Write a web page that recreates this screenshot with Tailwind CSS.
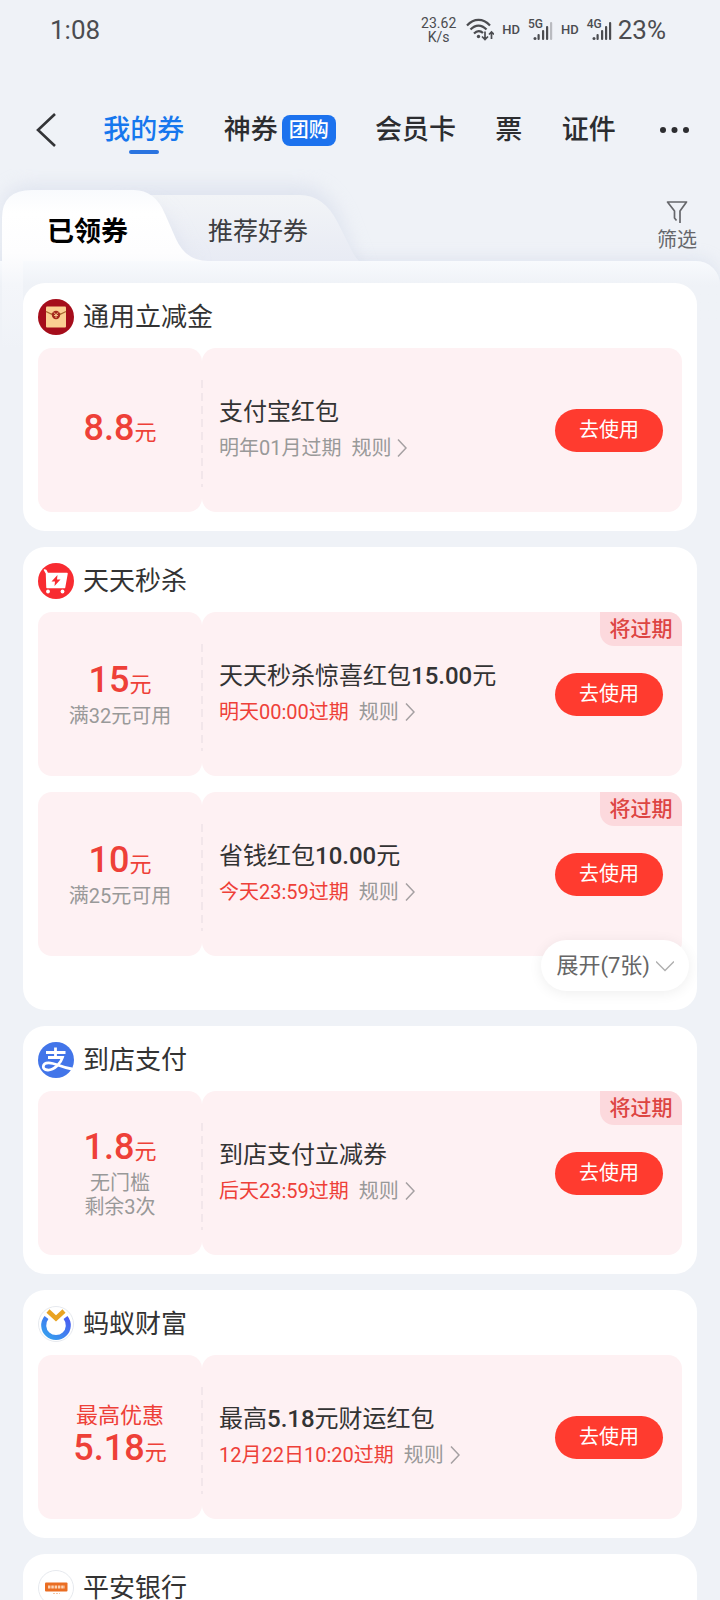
<!DOCTYPE html>
<html lang="zh-CN">
<head>
<meta charset="utf-8">
<meta name="viewport" content="width=device-width, initial-scale=1">
<title>我的券</title>
<script src="https://cdn.jsdelivr.net/npm/@tailwindcss/browser@4"></script>
</head>
<body class="h-screen overflow-hidden bg-[#eff2f7] font-['Roboto','Noto_Sans_CJK_SC',sans-serif] text-[#333]">

<!-- Shared symbols -->
<svg class="hidden" aria-hidden="true">
  <symbol id="chev" viewBox="0 0 10 20"><path d="M1 1.500 9 10 1 18.500" fill="none" stroke="#a5a0a2" stroke-width="1.500"/></symbol>
</svg>

<!-- Status bar -->
<div class="flex h-[60px] items-center justify-between pr-[54px] pl-[50px] text-[26px] text-[#4b4c50]">
  <span>1:08</span>
  <div class="flex items-center">
    <div class="text-center text-sm leading-[14px]"><p>23.62</p><p>K/s</p></div>
    <svg class="ml-2.5 h-6 w-7" viewBox="0 0 28 24" fill="none" stroke="#4b4c50" stroke-width="2.200">
      <path d="M1 7.500C8 0 17 0 24 7.500"/><path d="M4.500 11.500C9.500 6.200 15.500 6.200 20.500 11.500"/><path d="M8 15.500C11 12.500 14.500 12.500 17 15"/>
      <circle cx="12.500" cy="18.500" r="1.700" fill="#4b4c50" stroke="none"/>
      <path d="M19 13.500v8M16 18.500l3 3 3-3M25.500 21v-7M23 16.500l2.500-2.500 2.500 2.500" stroke-width="1.700"/>
    </svg>
    <span class="ml-2 text-[13px] font-medium">HD</span>
    <div class="ml-2 flex">
      <span class="text-xs leading-[10px] font-medium">5G</span>
      <svg class="-ml-2.5 h-[22px] w-5" viewBox="0 0 20 22"><g fill="#4b4c50"><circle cx="2" cy="19.500" r="1.500"/><rect x="4.500" y="15" width="2.200" height="6" rx="1"/><rect x="9" y="11" width="2.200" height="10" rx="1"/><rect x="13" y="7" width="2.200" height="14" rx="1"/></g><rect x="17" y="3" width="2.200" height="18" rx="1" fill="#b9bbc0"/></svg>
    </div>
    <span class="ml-2 text-[13px] font-medium">HD</span>
    <div class="ml-2 flex">
      <span class="text-xs leading-[10px] font-medium">4G</span>
      <svg class="-ml-2.5 h-[22px] w-5" viewBox="0 0 20 22"><g fill="#4b4c50"><circle cx="2" cy="19.500" r="1.500"/><rect x="4.500" y="15" width="2.200" height="6" rx="1"/><rect x="9" y="11" width="2.200" height="10" rx="1"/><rect x="13" y="7" width="2.200" height="14" rx="1"/><rect x="17" y="3" width="2.200" height="18" rx="1"/></g></svg>
    </div>
    <span class="ml-1.5">23%</span>
  </div>
</div>

<!-- Navigation -->
<nav class="flex h-[109px] items-center justify-between pt-[31px] pr-[30px] pl-9 text-[27px] leading-10 font-medium text-[#2c2d30]">
  <button class="mr-2" aria-label="返回"><svg class="h-[34px] w-5" viewBox="0 0 20 34" fill="none" stroke="#333437" stroke-width="2.600"><path d="M19 1 2 17l17 16"/></svg></button>
  <a href="#" class="relative text-[#1677ee]">我的券<span class="absolute -bottom-1 left-1/2 h-1 w-[30px] -translate-x-1/2 rounded-full bg-[#2a74e0]"></span></a>
  <a href="#" class="flex items-center gap-1">神券<span class="flex h-[31px] w-[54px] items-center justify-center rounded-lg bg-[#1c72ee] text-[20px] text-white">团购</span></a>
  <a href="#">会员卡</a>
  <a href="#">票</a>
  <a href="#">证件</a>
  <button class="ml-1" aria-label="更多"><svg class="h-2 w-[31px]" viewBox="0 0 31 8" fill="#2c2d30"><circle cx="4" cy="4" r="3"/><circle cx="15.500" cy="4" r="3"/><circle cx="27" cy="4" r="3"/></svg></button>
</nav>

<!-- Folder tabs -->
<div class="relative">
  <div class="absolute inset-x-0 top-[92px] h-[60px] rounded-tr-[24px] bg-linear-to-b from-[#f8fafd] to-[#eff2f7] to-[24px] shadow-[0_-4px_14px_rgba(200,208,228,0.35)] [clip-path:inset(-30px_0_0_0)]"></div>
  <svg class="absolute top-0 left-0 h-[272px] w-[420px]" viewBox="0 0 420 272" aria-hidden="true">
    <defs>
      <linearGradient id="g1" gradientUnits="userSpaceOnUse" x1="0" y1="20" x2="0" y2="180"><stop offset="0" stop-color="#f8fafd"/><stop offset=".15" stop-color="#fff"/><stop offset=".4" stop-color="#fdfdfe"/><stop offset=".6" stop-color="#f4f6fa"/><stop offset="1" stop-color="#eff2f7"/></linearGradient>
      <linearGradient id="g2" x1="0" y1="0" x2="0" y2="1"><stop offset="0" stop-color="#f2f4f7"/><stop offset="1" stop-color="#e8ebf4"/></linearGradient>
      <filter id="sh" x="-20%" y="-30%" width="140%" height="160%"><feGaussianBlur stdDeviation="9"/></filter>
      <clipPath id="above"><path d="M0 0h420v92H0z"/></clipPath>
    </defs>
    <g clip-path="url(#above)">
      <path d="M2 110V45Q2 16 32 16H300Q330 16 345 60L364 110z" fill="#d5dbea" opacity=".6" filter="url(#sh)"/>
      <path d="M140 26H300Q324 26 338 54L352 82Q355 88 359 92H140z" fill="url(#g2)"/>
      <path d="M120 34H140Q160 34 172 58L186 86 200 92H120z" fill="#d5dbea" opacity=".5" filter="url(#sh)"/>
    </g>
    <path d="M2 272V49Q2 21 32 21H134Q155 21 165 45L176 70Q186 92 208 92H23V272z" fill="url(#g1)"/>
  </svg>
  <div class="relative flex h-[92px] items-center pt-[34px] pr-[23px] pl-[47px]">
    <button class="text-[27px] font-bold text-black">已领券</button>
    <button class="ml-20 text-[25px] text-[#3c3d40]">推荐好券</button>
    <button class="ml-auto flex flex-col items-center text-[20px] leading-6 text-[#66676b]">
      <svg class="mb-1 -mt-3 h-6 w-[22px]" viewBox="0 0 22 24" fill="none" stroke="#66676b" stroke-width="1.700" stroke-linejoin="round"><path d="M14 23V11L20.500 2h-19L8.500 11v7l2 2.500"/></svg>筛选
    </button>
  </div>
</div>

<!-- Coupon groups -->
<main class="relative flex flex-col gap-4 px-[23px] pt-[22px]">

  <section class="rounded-[22px] bg-white px-[15px] pt-4 pb-[19px]">
    <h2 class="mb-[13px] flex h-9 items-center gap-[9px] text-[26px]">
      <svg class="size-9" viewBox="0 0 36 36"><circle cx="18" cy="18" r="18" fill="#a50d1b"/><rect x="8" y="7.500" width="20" height="21" rx="1" fill="#fbcf92"/><path d="M8 12.500Q18 19 28 12.500" fill="none" stroke="#a8672e" stroke-width="1.200"/><circle cx="18" cy="16" r="4.200" fill="#a52a1e"/><path d="m16 13.500 2 2.500 2-2.500M18 16v3M16 16.500h4" stroke="#fbcf92" fill="none" stroke-width=".9"/></svg>
      通用立减金
    </h2>
    <article class="relative flex h-[164px]">
      <div class="flex w-[164px] flex-col items-center justify-center rounded-[14px] bg-[#fef1f3] text-[20px] leading-6 text-[#999]">
        <p class="text-[22px] leading-[38px] text-[#ee4038]"><span class="text-[36px] font-medium">8.8</span>元</p>
      </div>
      <div class="flex flex-1 items-center justify-between rounded-[14px] bg-[#fef1f3] pr-[19px] pl-[17px]">
        <div>
          <h3 class="text-[24px] leading-9">支付宝红包</h3>
          <p class="flex items-center text-[20px] leading-9 text-[#999]">明年01月过期<a href="#" class="ml-2.5 flex items-center gap-1.5 text-[#999]">规则<svg class="h-5 w-2.5"><use href="#chev"/></svg></a></p>
        </div>
        <button class="h-[43px] w-[108px] rounded-full bg-[#ff3b2f] text-[20px] text-white">去使用</button>
      </div>
      <span class="absolute top-8 left-[163px] h-[107px] w-0.5 bg-[repeating-linear-gradient(#f2e6ea_0_8px,transparent_8px_13px)]"></span>
    </article>
  </section>

  <section class="relative rounded-[22px] bg-white px-[15px] pt-4 pb-[54px]">
    <h2 class="mb-[13px] flex h-9 items-center gap-[9px] text-[26px]">
      <svg class="size-9" viewBox="0 0 36 36"><circle cx="18" cy="18" r="18" fill="#f82b31"/><path d="M6.500 7 8 7.500 9.500 10.500H29L26.500 24.500H9L8.500 10.500z" fill="#fff" stroke="#fff" stroke-width="1.500" stroke-linejoin="round"/><circle cx="10" cy="28.500" r="1.900" fill="#fff"/><circle cx="24.500" cy="28.500" r="1.900" fill="#fff"/><path d="m19.500 12-6 6.500H17L16.500 23l6-6.500H19z" fill="#f82b31"/></svg>
      天天秒杀
    </h2>
    <div class="flex flex-col gap-4">
      <article class="relative flex h-[164px]">
        <div class="flex w-[164px] flex-col items-center justify-center rounded-[14px] bg-[#fef1f3] text-[20px] leading-6 text-[#999]">
          <p class="text-[22px] leading-[38px] text-[#ee4038]"><span class="text-[36px] font-medium">15</span>元</p>
          <p>满32元可用</p>
        </div>
        <div class="flex flex-1 items-center justify-between rounded-[14px] bg-[#fef1f3] pr-[19px] pl-[17px]">
          <div>
            <h3 class="text-[24px] leading-9">天天秒杀惊喜红包<span class="font-medium">15.00</span>元</h3>
            <p class="flex items-center text-[20px] leading-9 text-[#ee4038]">明天00:00过期<a href="#" class="ml-2.5 flex items-center gap-1.5 text-[#999]">规则<svg class="h-5 w-2.5"><use href="#chev"/></svg></a></p>
          </div>
          <button class="h-[43px] w-[108px] rounded-full bg-[#ff3b2f] text-[20px] text-white">去使用</button>
        </div>
        <span class="absolute top-8 left-[163px] h-[107px] w-0.5 bg-[repeating-linear-gradient(#f2e6ea_0_8px,transparent_8px_13px)]"></span>
        <span class="absolute top-0 right-0 flex h-[34px] w-[82px] items-center justify-center rounded-tr-[14px] rounded-bl-[14px] bg-[#fcd9dd] pt-0.5 text-[21px] font-medium text-[#dd4542]">将过期</span>
      </article>
      <article class="relative flex h-[164px]">
        <div class="flex w-[164px] flex-col items-center justify-center rounded-[14px] bg-[#fef1f3] text-[20px] leading-6 text-[#999]">
          <p class="text-[22px] leading-[38px] text-[#ee4038]"><span class="text-[36px] font-medium">10</span>元</p>
          <p>满25元可用</p>
        </div>
        <div class="flex flex-1 items-center justify-between rounded-[14px] bg-[#fef1f3] pr-[19px] pl-[17px]">
          <div>
            <h3 class="text-[24px] leading-9">省钱红包<span class="font-medium">10.00</span>元</h3>
            <p class="flex items-center text-[20px] leading-9 text-[#ee4038]">今天23:59过期<a href="#" class="ml-2.5 flex items-center gap-1.5 text-[#999]">规则<svg class="h-5 w-2.5"><use href="#chev"/></svg></a></p>
          </div>
          <button class="h-[43px] w-[108px] rounded-full bg-[#ff3b2f] text-[20px] text-white">去使用</button>
        </div>
        <span class="absolute top-8 left-[163px] h-[107px] w-0.5 bg-[repeating-linear-gradient(#f2e6ea_0_8px,transparent_8px_13px)]"></span>
        <span class="absolute top-0 right-0 flex h-[34px] w-[82px] items-center justify-center rounded-tr-[14px] rounded-bl-[14px] bg-[#fcd9dd] pt-0.5 text-[21px] font-medium text-[#dd4542]">将过期</span>
      </article>
    </div>
    <button class="absolute right-2 bottom-[19px] flex h-[51px] items-center gap-1.5 rounded-full bg-white px-[15px] text-[22px] text-[#666] shadow-[0_2px_14px_rgba(0,0,0,0.07)]">展开(7张)<svg class="h-3 w-[18px]" viewBox="0 0 18 12" fill="none" stroke="#b0b0b0" stroke-width="1.500"><path d="m0 1.500 9 9 9-9"/></svg></button>
  </section>

  <section class="rounded-[22px] bg-white px-[15px] pt-4 pb-[19px]">
    <h2 class="mb-[13px] flex h-9 items-center gap-[9px] text-[26px]">
      <svg class="size-9" viewBox="0 0 36 36"><circle cx="18" cy="18" r="18" fill="#4275e9"/><path d="M8 10.500H27.500M17.500 5.500V15.500M10 15.500H24.500C23 21 16 28.500 9.500 28 3.500 27.500 4 21 10.500 20.800 17 20.600 23 25.500 34 27" fill="none" stroke="#fff" stroke-width="2.800"/></svg>
      到店支付
    </h2>
    <article class="relative flex h-[164px]">
      <div class="flex w-[164px] flex-col items-center justify-center rounded-[14px] bg-[#fef1f3] text-[20px] leading-6 text-[#999]">
        <p class="text-[22px] leading-[38px] text-[#ee4038]"><span class="text-[36px] font-medium">1.8</span>元</p>
        <p>无门槛</p>
        <p>剩余3次</p>
      </div>
      <div class="flex flex-1 items-center justify-between rounded-[14px] bg-[#fef1f3] pr-[19px] pl-[17px]">
        <div>
          <h3 class="text-[24px] leading-9">到店支付立减券</h3>
          <p class="flex items-center text-[20px] leading-9 text-[#ee4038]">后天23:59过期<a href="#" class="ml-2.5 flex items-center gap-1.5 text-[#999]">规则<svg class="h-5 w-2.5"><use href="#chev"/></svg></a></p>
        </div>
        <button class="h-[43px] w-[108px] rounded-full bg-[#ff3b2f] text-[20px] text-white">去使用</button>
      </div>
      <span class="absolute top-8 left-[163px] h-[107px] w-0.5 bg-[repeating-linear-gradient(#f2e6ea_0_8px,transparent_8px_13px)]"></span>
      <span class="absolute top-0 right-0 flex h-[34px] w-[82px] items-center justify-center rounded-tr-[14px] rounded-bl-[14px] bg-[#fcd9dd] pt-0.5 text-[21px] font-medium text-[#dd4542]">将过期</span>
    </article>
  </section>

  <section class="rounded-[22px] bg-white px-[15px] pt-4 pb-[19px]">
    <h2 class="mb-[13px] flex h-9 items-center gap-[9px] text-[26px]">
      <svg class="size-9" viewBox="0 0 36 36"><defs><linearGradient id="ring" x1="0" y1="1" x2="1" y2="0"><stop offset="0" stop-color="#35a3ee"/><stop offset="1" stop-color="#4a5cf0"/></linearGradient></defs><circle cx="18" cy="18" r="17.500" fill="#fff" stroke="#e6e9ee"/><path d="M8.500 11.500A12.300 12.300 0 1 0 27.500 11.500" fill="none" stroke="url(#ring)" stroke-width="5"/><path d="M10 5 18 12.500 26 5" fill="none" stroke="#e9a322" stroke-width="4.500"/></svg>
      蚂蚁财富
    </h2>
    <article class="relative flex h-[164px]">
      <div class="flex w-[164px] flex-col items-center justify-center rounded-[14px] bg-[#fef1f3] text-[22px] text-[#ee4038]">
        <p class="leading-[26px]">最高优惠</p>
        <p class="leading-[38px]"><span class="text-[36px] font-medium">5.18</span>元</p>
      </div>
      <div class="flex flex-1 items-center justify-between rounded-[14px] bg-[#fef1f3] pr-[19px] pl-[17px]">
        <div>
          <h3 class="text-[24px] leading-9">最高<span class="font-medium">5.18</span>元财运红包</h3>
          <p class="flex items-center text-[20px] leading-9 text-[#ee4038]">12月22日10:20过期<a href="#" class="ml-2.5 flex items-center gap-1.5 text-[#999]">规则<svg class="h-5 w-2.5"><use href="#chev"/></svg></a></p>
        </div>
        <button class="h-[43px] w-[108px] rounded-full bg-[#ff3b2f] text-[20px] text-white">去使用</button>
      </div>
      <span class="absolute top-8 left-[163px] h-[107px] w-0.5 bg-[repeating-linear-gradient(#f2e6ea_0_8px,transparent_8px_13px)]"></span>
    </article>
  </section>

  <section class="rounded-[22px] bg-white px-[15px] pt-4 pb-[19px]">
    <h2 class="flex h-9 items-center gap-[9px] text-[26px]">
      <svg class="size-9" viewBox="0 0 36 36"><circle cx="18" cy="18" r="17.500" fill="#fff" stroke="#e6e9ee"/><rect x="7" y="12.500" width="22.500" height="9" rx="1" fill="#ea6d22"/><path d="M10 17H27" stroke="#fbd3b5" stroke-width="3" stroke-dasharray="2.500 .8"/><path d="M15 23.500h7" stroke="#f6c7a6" stroke-dasharray="2 1"/></svg>
      平安银行
    </h2>
  </section>
</main>
</body>
</html>
